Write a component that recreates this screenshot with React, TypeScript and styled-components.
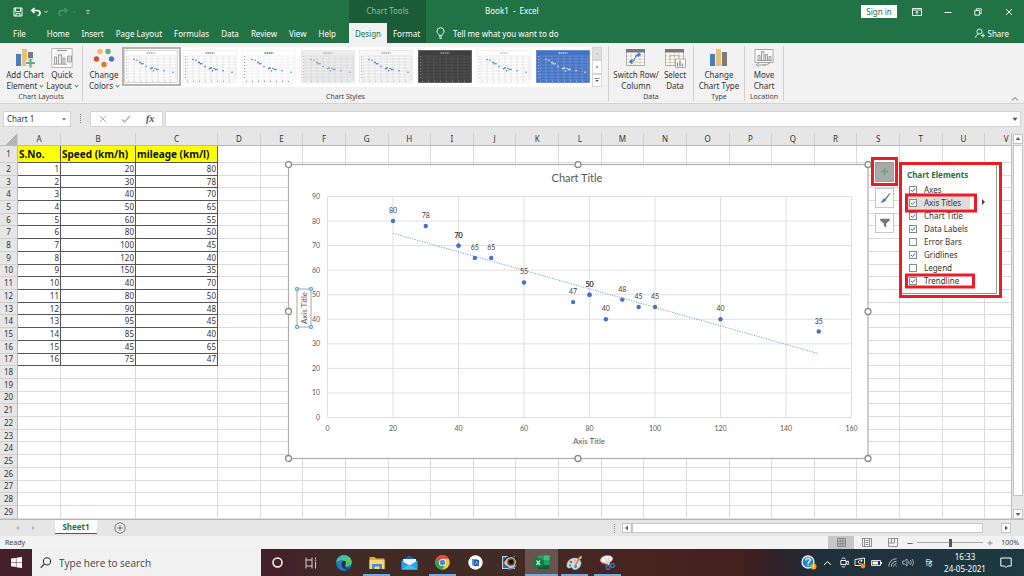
import React from "react";
import styled, { createGlobalStyle, css } from "styled-components";

const GREEN = "#217346";
const UI = `"Noto Sans", "Open Sans", sans-serif`;
const SHEET = `Lato, "Open Sans", sans-serif`;

const GlobalStyle = createGlobalStyle`
  *, *::before, *::after { box-sizing: border-box; }
  html, body { margin: 0; padding: 0; height: 100%; }
  #root { height: 100%; }
  body { font-family: ${UI}; font-size: 8px; color: #333; overflow: hidden; }
  button, input { font: inherit; color: inherit; margin: 0; padding: 0; border: 0; background: none; border-radius: 0; }
  button { cursor: pointer; white-space: nowrap; }
  svg { display: block; flex: none; }
`;

const Shell = styled.div`
  display: flex;
  flex-direction: column;
  height: 100vh;
  min-width: 0;
`;

/* ---------- title bar and tabs ---------- */

const Header = styled.header`
  background: ${GREEN};
  color: #fff;
  flex: none;
`;

const TitleBar = styled.div`
  display: grid;
  grid-template-columns: 349px 77px 1fr auto;
  height: 23px;
  align-items: center;
`;

const QuickAccess = styled.div`
  display: flex;
  align-items: center;
  padding-left: 12px;
  gap: 4px;
`;

const IconButton = styled.button<{ $w?: number; $h?: number }>`
  display: flex;
  align-items: center;
  justify-content: center;
  width: ${(p) => p.$w ?? 12}px;
  height: ${(p) => p.$h ?? 14}px;
  flex: none;
`;

const ChartTools = styled.div`
  height: 23px;
  line-height: 21px;
  text-align: center;
  background: #1a5c38;
  color: #8fbba2;
`;

const DocTitle = styled.div`
  padding-left: 59px;
  line-height: 21px;
  height: 23px;
  white-space: pre;
`;

const WindowControls = styled.div`
  display: flex;
  align-items: center;
  height: 21px;
`;

const SignIn = styled.button`
  width: 36px;
  height: 13px;
  line-height: 13px;
  margin-right: 4px;
  background: #fff;
  color: ${GREEN};
`;

const TabRow = styled.nav`
  display: flex;
  height: 20px;
  padding-left: 7px;
`;

const Tab = styled.button<{ $active?: boolean; $contextual?: boolean }>`
  height: 20px;
  padding: 0 6px;
  color: ${(p) => (p.$active ? GREEN : "#fff")};
  background: ${(p) => (p.$active ? "#f2f2f2" : p.$contextual ? "#1a5c38" : "transparent")};
`;

const MainTabs = styled.div`
  display: flex;
  width: 342px;
  flex: none;
  & > button:first-child { margin-right: 9px; }
`;

const ContextTabs = styled.div`
  display: grid;
  grid-template-columns: 38px 39px;
  flex: none;
  & > button { padding: 0; }
`;

const TellMe = styled.button`
  display: flex;
  align-items: center;
  gap: 8px;
  padding-left: 10px;
`;

const Share = styled.button`
  display: flex;
  align-items: center;
  gap: 3px;
  margin-left: auto;
  padding-right: 15px;
`;

/* ---------- ribbon ---------- */

const Ribbon = styled.section`
  display: flex;
  height: 61px;
  flex: none;
  background: #f2f2f2;
  border-bottom: 1px solid #d2d2d2;
`;

const Group = styled.div<{ $w: number }>`
  display: flex;
  flex-direction: column;
  width: ${(p) => p.$w}px;
  flex: none;
  margin: 3px 0 2px;
  border-right: 1px solid #d0d0d0;
`;

const GroupBody = styled.div<{ $start?: boolean }>`
  display: flex;
  justify-content: ${(p) => (p.$start ? "flex-start" : "center")};
  padding-left: ${(p) => (p.$start ? 3 : 0)}px;
  height: 46px;
`;

const GroupLabel = styled.div`
  height: 12px;
  line-height: 12px;
  font-size: 7px;
  text-align: center;
  color: #444;
`;

const Tool = styled.button<{ $w: number }>`
  display: flex;
  flex-direction: column;
  align-items: center;
  width: ${(p) => p.$w}px;
  line-height: 11px;
  svg { margin: 2px 0 1px; }
`;

const Caret = styled.span`
  display: inline-block;
  width: 3px;
  height: 3px;
  margin: 0 0 2px 3px;
  border: solid #777;
  border-width: 0 1px 1px 0;
  transform: rotate(45deg);
`;

const Gallery = styled.div`
  display: flex;
  width: 480px;
  height: 40px;
  margin-top: 1px;
  background: #fff;
`;

const Swatch = styled.button<{ $selected?: boolean }>`
  display: flex;
  align-items: center;
  justify-content: center;
  flex: 1;
  min-width: 0;
  height: 39px;
  border: 2px solid ${(p) => (p.$selected ? "#b5b2af" : "transparent")};
`;

const GalleryScroll = styled.div`
  display: flex;
  flex-direction: column;
  width: 10px;
  & > button { flex: 1; width: 10px; border: 1px solid #d5d5d5; background: #fff; }
  & > button:first-child { background: #dedede; }
`;

const Collapse = styled.div`
  display: flex;
  align-items: flex-end;
  margin-left: auto;
  padding: 0 3px 0 0;
`;

/* ---------- formula bar ---------- */

const FormulaBar = styled.div`
  display: flex;
  align-items: center;
  height: 29px;
  flex: none;
  padding: 0 3px;
  background: #e6e6e6;
`;

const Field = styled.div<{ $w?: number }>`
  display: flex;
  align-items: center;
  height: 16px;
  ${(p) => (p.$w ? css`width: ${p.$w}px; flex: none;` : css`flex: 1; min-width: 0;`)}
  background: #fff;
  border: 1px solid #d4d4d4;
  input { flex: 1; min-width: 0; padding-left: 3px; outline: 0; }
`;

const Grip = styled.span<{ $m: string }>`
  width: 1px;
  height: 9px;
  margin: ${(p) => p.$m};
  border-left: 1px dotted #888;
`;

const FxTools = styled(Field)`
  justify-content: space-around;
  margin-right: 2px;
`;

const Fx = styled.i`
  font: italic 700 10px "Liberation Serif", serif;
  color: #555;
`;

/* ---------- worksheet ---------- */

const Workspace = styled.main`
  display: flex;
  flex: 1;
  min-height: 0;
  background: #e6e6e6;
`;

const SheetPane = styled.div`
  position: relative;
  flex: 1;
  min-width: 0;
  overflow: hidden;
  background: #fff;
`;

const Grid = styled.table`
  width: calc(100% + 17px);
  height: 100%;
  table-layout: fixed;
  border-collapse: separate;
  border-spacing: 0;
`;

const Col = styled.col<{ $w: number }>`
  width: ${(p) => p.$w}px;
`;

const Row = styled.tr<{ $tall?: boolean }>`
  height: ${(p) => (p.$tall ? 16 : 12)}px;
`;

const ColHead = styled.th`
  height: 13px;
  padding: 0;
  line-height: 12px;
  font-weight: 400;
  background: #e6e6e6;
  border-right: 1px solid #cfcfcf;
  border-bottom: 1px solid #b8b8b8;
`;

const RowHead = styled.th`
  padding: 0;
  line-height: 10px;
  font-weight: 400;
  background: #e6e6e6;
  border-right: 1px solid #b8b8b8;
  border-bottom: 1px solid #cfcfcf;
`;

const Cell = styled.td<{ $kind?: "head" | "data" }>`
  padding: 0 1px;
  line-height: 10px;
  text-align: right;
  overflow: hidden;
  white-space: nowrap;
  border-right: 1px solid #dcdcdc;
  border-bottom: 1px solid #dcdcdc;
  ${(p) => p.$kind && css`border-color: #555;`}
  ${(p) =>
    p.$kind === "head" &&
    css`
      font: 700 10px/14px "Noto Sans", sans-serif;
      text-align: left;
      color: #111;
      background: #ffff00;
    `}
`;

const Corner = styled(ColHead)`
  background: linear-gradient(135deg, transparent 60%, #b4b4b4 60%) #e6e6e6;
`;

const ChartObject = styled.div`
  position: absolute;
  left: 284px;
  top: 28px;
`;

const SideButtons = styled.div`
  position: absolute;
  left: 871px;
  top: 24px;
  display: flex;
  flex-direction: column;
  align-items: center;
  width: 27px;
  gap: 5px;
`;

const SideButton = styled.button`
  display: flex;
  align-items: center;
  justify-content: center;
  width: 19px;
  height: 20px;
  background: #fff;
  border: 1px solid #c8c8c8;
`;

const PlusFrame = styled.div`
  display: flex;
  align-items: center;
  justify-content: center;
  width: 27px;
  height: 29px;
  margin-bottom: -3px;
  border: 3px solid #ed1c24;
  background: #fff;
  ${SideButton} { background: #a9a9a9; border-color: #999; }
`;

const ElementsPanel = styled.fieldset`
  position: absolute;
  left: 899px;
  top: 29px;
  width: 103px;
  height: 136px;
  margin: 0;
  padding: 4px 0 0;
  background: #fff;
  border: 3px solid #ed1c24;
  box-shadow: inset -2px -1px 0 #fff, inset -3px -2px 0 #7fa58e;
`;

const PanelTitle = styled.div`
  padding-left: 5px;
  height: 12px;
  line-height: 12px;
  font-weight: 700;
  color: ${GREEN};
  margin-bottom: 2px;
`;

const Option = styled.label<{ $hover?: boolean }>`
  position: relative;
  display: flex;
  align-items: center;
  gap: 7px;
  height: 13px;
  padding-left: 7px;
  line-height: 13px;
  span { flex: none; }
  ${(p) =>
    p.$hover &&
    css`
      width: 68px;
      background: linear-gradient(#dfdddc, #dfdddc) 5px 0 no-repeat;
    `}
`;

const Mark = styled.i<{ $w: number; $h: number }>`
  position: absolute;
  left: 3px;
  top: 50%;
  width: ${(p) => p.$w}px;
  height: ${(p) => p.$h}px;
  transform: translateY(-50%);
  border: 3px solid #ed1c24;
  z-index: 1;
  pointer-events: none;
`;

const Flyout = styled.i`
  position: absolute;
  left: 80px;
  top: 3px;
  border-left: 3px solid #444;
  border-top: 3px solid transparent;
  border-bottom: 3px solid transparent;
`;

const Check = styled.input`
  appearance: none;
  width: 8px;
  height: 8px;
  flex: none;
  border: 1px solid #8a8a8a;
  background: #fff;
  &:checked {
    background: #fff
      url("data:image/svg+xml,%3Csvg xmlns='http://www.w3.org/2000/svg' viewBox='0 0 6 6'%3E%3Cpath d='M1 3l1.5 1.5L5.2 1.3' fill='none' stroke='%232b6ca8' stroke-width='1'/%3E%3C/svg%3E")
      center / 6px 6px no-repeat;
  }
`;

const VScroll = styled.div`
  display: flex;
  flex-direction: column;
  align-items: center;
  width: 13px;
  flex: none;
  padding: 1px 0 0;
  border-left: 1px solid #bdbdbd;
`;

const ScrollButton = styled.button`
  display: flex;
  align-items: center;
  justify-content: center;
  width: 10px;
  height: 10px;
  flex: none;
  background: #fff;
  border: 1px solid #c4c4c4;
`;

const VThumb = styled.div`
  width: 10px;
  flex: 1;
  margin: 1px 0 13px;
  background: #fff;
  border: 1px solid #c4c4c4;
`;

/* ---------- sheet tabs and status bar ---------- */

const SheetTabs = styled.div`
  display: flex;
  align-items: center;
  height: 17px;
  flex: none;
  padding: 0 13px 0 11px;
  background: #e6e6e6;
  border-top: 1px solid #b8b8b8;
`;

const SheetTab = styled.button`
  align-self: flex-start;
  width: 42px;
  height: 14px;
  margin: 0 16px 0 13px;
  line-height: 11px;
  font-weight: 700;
  background: #fff;
  color: ${GREEN};
  border-bottom: 1px solid ${GREEN};
`;

const HScroll = styled.div`
  display: flex;
  align-items: center;
  width: 389px;
  margin-left: 7px;
`;

const HThumb = styled.div`
  flex: 1;
  height: 10px;
  margin-right: 18px;
  background: #fff;
  border: 1px solid #c4c4c4;
`;

const StatusBar = styled.div`
  display: flex;
  align-items: center;
  height: 13px;
  flex: none;
  padding: 0 5px;
  font-size: 7px;
  background: #f2f2f2;
  color: #444;
`;

const Views = styled.div`
  display: flex;
  align-items: center;
  margin-left: auto;
`;

const ViewButton = styled.button<{ $active?: boolean }>`
  display: flex;
  align-items: center;
  justify-content: center;
  width: 26px;
  height: 13px;
  background: ${(p) => (p.$active ? "#c6c6c6" : "transparent")};
`;

const ZoomSlider = styled.input`
  appearance: none;
  width: 66px;
  height: 9px;
  margin: 0 3px;
  background: linear-gradient(#aaa, #aaa) center / 100% 1px no-repeat;
  &::-webkit-slider-thumb {
    appearance: none;
    width: 3px;
    height: 8px;
    background: #555;
  }
`;

const ZoomValue = styled.span`
  width: 25px;
  text-align: right;
`;

/* ---------- taskbar ---------- */

const Taskbar = styled.footer`
  display: flex;
  height: 27px;
  flex: none;
  color: #fff;
  background: linear-gradient(90deg, #43202c 0 26%, #43202a 27%, #412b24 34%, #432a26 52%, #47241f 62%, #44211f 72%, #2f2129 76%, #20303a 80%, #1e3a42 100%);
`;

const StartButton = styled(IconButton)`
  width: 32px;
  height: 27px;
`;

const Search = styled.label`
  display: flex;
  align-items: center;
  gap: 8px;
  width: 229px;
  flex: none;
  padding-left: 8px;
  font-family: "Open Sans", sans-serif;
  font-size: 10px;
  background: #f1f1f1;
  color: #444;
  input { flex: 1; min-width: 0; outline: 0; }
  input::placeholder { color: #444; opacity: 1; }
`;

const TaskButton = styled.button<{ $open?: boolean; $active?: boolean }>`
  display: flex;
  align-items: center;
  justify-content: center;
  width: 33px;
  height: 27px;
  flex: none;
  background: ${(p) => (p.$active ? "#67534f" : "transparent")};
  background-image: ${(p) => (p.$open ? "linear-gradient(#76aadb, #76aadb)" : "none")};
  background-repeat: no-repeat;
  background-position: center bottom;
  background-size: ${(p) => (p.$active ? 33 : 27)}px 2px;
`;

const Tray = styled.div`
  display: flex;
  align-items: center;
  margin-left: auto;
`;

const Language = styled.span`
  width: 26px;
  text-align: center;
`;

const Clock = styled.div`
  width: 46px;
  text-align: center;
  line-height: 12px;
  white-space: nowrap;
`;

/* ---------- data ---------- */

const DATA: [number, number][] = [
  [20, 80], [30, 78], [40, 70], [50, 65], [60, 55], [80, 50], [100, 45], [120, 40],
  [150, 35], [40, 70], [80, 50], [90, 48], [95, 45], [85, 40], [45, 65], [75, 47],
];
const COLS = "ABCDEFGHIJKLMNOPQRSTUV".split("");
const HEADINGS = ["S.No.", "Speed (km/h)", "mileage (km/l)"];

const STYLES = [
  { bg: "#fff", grid: "#dcdcdc", dot: "#4472c4", ink: "#888", frame: "#bbb" },
  { bg: "#fff", grid: "#dcdcdc", dot: "#2f5fb8", ink: "#555", frame: "#e6e6e6" },
  { bg: "#fff", grid: "#e8eaf2", dot: "#4472c4", ink: "#334", frame: "#eee" },
  { bg: "#ededed", grid: "#d5d5d5", dot: "#7b93bd", ink: "#999", frame: "#e0e0e0" },
  { bg: "#f7f7f7", grid: "#d9d9d9", dot: "#4472c4", ink: "#888", frame: "#e0e0e0" },
  { bg: "#3f3f3f", grid: "#5c5c5c", dot: "#4a4f5a", ink: "#ccc", frame: "#3f3f3f" },
  { bg: "#fff", grid: "#dcdcdc", dot: "#4472c4", ink: "#aaa", frame: "#e6e6e6" },
  { bg: "#4472c4", grid: "#7c9cd8", dot: "#fff", ink: "#fff", frame: "#4472c4" },
];

/* ---------- drawings ---------- */

function MiniChart({ s }: { s: (typeof STYLES)[number] }) {
  return (
    <svg width="54" height="33" viewBox="0 0 54 33">
      <rect x=".5" y=".5" width="53" height="32" fill={s.bg} stroke={s.frame} strokeWidth=".6" />
      <path
        d={[0, 1, 2, 3, 4, 5, 6, 7, 8].map((i) => `M4 ${6 + i * 3}H52`).join("") +
          [0, 1, 2, 3, 4, 5, 6, 7, 8].map((i) => `M${4 + i * 6} 6V30`).join("")}
        stroke={s.grid} strokeWidth=".6" />
      <path d="M22.500 3h9" stroke={s.ink} strokeWidth="1" strokeDasharray="1.600 .5" />
      <path d="M4 31.300H52" stroke={s.ink} strokeWidth=".6" strokeDasharray="1 5" />
      <path d="M2.500 6V30" stroke={s.ink} strokeWidth=".7" strokeDasharray=".8 2.200" />
      {DATA.map(([x, y], i) => (
        <circle key={i} cx={4 + x * 0.3} cy={32 - y * 0.28} r=".75" fill={s.dot} />
      ))}
    </svg>
  );
}

const Bars = ({ plus }: { plus?: boolean }) => (
  <svg width="22" height="20" viewBox="0 0 22 20">
    <path d="M2 6h5v12H2z" fill="#4a7fb8" />
    <path d="M8 1h5v17H8z" fill="#eac074" />
    <path d="M14 4h5v14h-5z" fill="#7b7b7b" />
    {plus && <path d="M16.500 10v10M11.500 15h10" stroke="#f2f2f2" strokeWidth="4.500" />}
    {plus && <path d="M16.500 10.500v9M12 15h9" stroke="#6aa88a" strokeWidth="2.200" />}
  </svg>
);

const LayoutIcon = () => (
  <svg width="22" height="20" viewBox="0 0 22 20">
    <path d="M.8.500h20.400v19H.8z" fill="#fff" stroke="#b5b5b5" />
    <path d="M6 2.500h10" stroke="#999" strokeWidth="1.200" />
    <path d="M3 6h11M3 9h11M3 12h11" stroke="#c5c5c5" strokeWidth=".6" />
    <path d="M3.500 16V9h2v7M7.500 16V7h3v9M12 16V10h2v6M2 16.200h14M16.500 8h4v6h-4z" fill="#eee" stroke="#888" strokeWidth=".8" />
    <path d="M17.500 10h2M17.500 12h2" stroke="#888" strokeWidth=".8" />
  </svg>
);

const ColorsIcon = () => (
  <svg width="22" height="20" viewBox="0 0 22 20">
    <circle cx="7" cy="3.500" r="2.700" fill="#ebbf70" />
    <circle cx="15" cy="3.500" r="2.700" fill="#6aa88a" />
    <circle cx="3.500" cy="11" r="2.700" fill="#d1502f" />
    <circle cx="18.500" cy="11" r="2.700" fill="#3f7ebc" />
    <circle cx="11" cy="16.500" r="2.700" fill="#e07b1c" />
  </svg>
);

const SheetIcon = ({ swap }: { swap?: boolean }) => (
  <svg width="22" height="20" viewBox="0 0 22 20">
    <path d="M1.500 1.500h18v16h-18z" fill="#fff" stroke="#999" strokeWidth=".8" />
    <path d="M1.500 8h18M1.500 11.300h18M1.500 14.500h18M6 5v12M10.500 5v12M15 5v12" stroke="#c9b9a0" strokeWidth=".7" />
    <path d="M1 1h19v3.500H1z" fill="#777" />
    {swap ? (
      <>
        <path d="M5.500 12.500h4v-5h5" fill="none" stroke="#fff" strokeWidth="3.500" />
        <path d="M5.500 13.500c3 .3 4-1 4-3.500M7.500 11.300l-2.700 2.200 2.700 2.200M10.500 10c0-2.700 1-3.500 4-3.500M12.700 4.500l2.500 2-2.500 2.200" fill="none" stroke="#3f7ebc" strokeWidth="1.300" />
      </>
    ) : (
      <>
        <path d="M11.500 11h10v8.500h-10z" fill="#fff" stroke="#999" strokeWidth=".8" />
        <path d="M13.500 18.500v-4M16 18.500v-6M18.500 18.500v-3" stroke="#888" strokeWidth="1.400" />
        <path d="M6 7.500h9v3.500M6 7.500v6" fill="none" stroke="#eab56a" />
      </>
    )}
  </svg>
);

const MoveIcon = () => (
  <svg width="22" height="20" viewBox="0 0 22 20">
    <path d="M2 1.500h18v13H2z" fill="#fff" stroke="#999" strokeWidth=".9" />
    <path d="M5 12.500v-5h2v5M8.500 12.500v-9h2.500v9M12.500 12.500v-6h2v6M16 12.500v-4h2v4M4 12.500h15" fill="#eee" stroke="#888" strokeWidth=".8" />
    <path d="M5 17h8l4-2M6 15l-3 2 3 2M13 17H9" fill="none" stroke="#999" strokeWidth=".9" />
  </svg>
);

type StrokeProps = { d: string; w?: number; h?: number; color?: string; sw?: number };
const Stroke = ({ d, w = 10, h = 10, color = "currentColor", sw = 1 }: StrokeProps) => (
  <svg width={w} height={h} viewBox={`0 0 ${w} ${h}`} fill="none" stroke={color} strokeWidth={sw}>
    <path d={d} />
  </svg>
);

const Tri = ({ d, color = "#666" }: { d: string; color?: string }) => (
  <svg width="6" height="6" viewBox="0 0 6 6"><path d={d} fill={color} /></svg>
);
const DOWN = "M.5 2h5L3 5z";
const UP = "M.5 4h5L3 1z";
const LEFT = "M4 .5v5L1 3z";
const RIGHT = "M2 .5v5L5 3z";

const PLOT = { left: 43.5, top: 35.5, width: 524, height: 221 };
const px = (x: number) => PLOT.left + (x / 160) * PLOT.width;
const py = (y: number) => PLOT.top + PLOT.height - (y / 90) * PLOT.height;

function ScatterChart() {
  const xs = [0, 20, 40, 60, 80, 100, 120, 140, 160];
  const ys = [0, 10, 20, 30, 40, 50, 60, 70, 80, 90];
  return (
    <svg width="588" height="302" viewBox="0 0 588 302" fontFamily={SHEET} fontSize="7" fill="#595959" textAnchor="middle">
      <rect x="4.500" y="3.500" width="579.500" height="294" fill="#fff" stroke="#adadad" strokeWidth="1.200" />
      <g stroke="#e0e0e0">
        {xs.map((x) => <path key={x} d={`M${px(x)} ${py(90)}V${py(0)}`} />)}
        {ys.map((y) => <path key={y} d={`M${px(0)} ${py(y)}H${px(160)}`} />)}
      </g>
      {xs.map((x) => <text key={x} x={px(x)} y="270">{x}</text>)}
      {ys.map((y) => <text key={y} x="36" y={py(y) + 2.5} textAnchor="end">{y}</text>)}
      <path d={`M${px(20)} ${py(75)}L${px(150)} ${py(26)}`} stroke="#7f9fce" strokeDasharray="1.200 1.300" />
      {DATA.map(([x, y], i) => (
        <g key={i}>
          <circle cx={px(x)} cy={py(y)} r="2.200" fill="#4472c4" />
          <text x={px(x)} y={py(y) - 8} fill="#404040">{y}</text>
        </g>
      ))}
      <text x="293" y="21" fontSize="11">Chart Title</text>
      <text x="305" y="283" fontSize="8">Axis Title</text>
      <rect x="13" y="128" width="14" height="38" fill="#fff" stroke="#a6a6a6" />
      <text transform="translate(23 147) rotate(-90)" fontSize="8">Axis Title</text>
      {[[13, 128], [27, 128], [13, 166], [27, 166]].map(([x, y]) => (
        <circle key={`${x}-${y}`} cx={x} cy={y} r="1.800" fill="#b5d9f1" stroke="#4f9fd3" strokeWidth=".9" />
      ))}
      {[[4.5, 3.5], [294, 3.5], [584, 3.5], [4.5, 150.5], [584, 150.5], [4.5, 297.5], [294, 297.5], [584, 297.5]].map(([x, y]) => (
        <circle key={`${x}-${y}`} cx={x} cy={y} r="3" fill="#fff" stroke="#8c8c8c" strokeWidth="1.300" />
      ))}
    </svg>
  );
}

const Edge = () => (
  <svg width="16" height="16" viewBox="0 0 16 16">
    <circle cx="8" cy="8" r="7.800" fill="#1a7fd0" />
    <path d="M.3 7C1 2.500 4.500.2 8 .2c4.500 0 7.800 3.300 7.800 6.800 0 2.500-2 4-4.300 4-1.500 0-2.300-.6-2-1.300.8-1 .8-3.700-2.300-4.200C4.500 5 1.500 6 .3 7z" fill="#4cc96b" />
    <path d="M.3 7C1 2.500 4.500.2 8 .2c2 0 3.500.6 4.800 1.600C8 1 4 3 .3 7z" fill="#35b8d6" />
    <path d="M5.500 8.500c-.5 3 1.500 6 5 6.300 1.500-.3 3-1.300 4-2.800-3.500 1.500-8 .5-7.500-4z" fill="#0c4a94" />
    <path d="M9.300 9.500c1-1 .8-3-.8-3.700-1.500 0-3 1.500-2.500 4 .3 1.700 2 3 4 3-1.500-1-1.500-2.500-.7-3.300z" fill="#43282a" />
  </svg>
);

const Folder = () => (
  <svg width="16" height="14" viewBox="0 0 16 14">
    <path d="M.5 1h5l1.500 1.500h8.500V13H.5z" fill="#e8a92f" />
    <path d="M.5 4h15v9H.5z" fill="#fcd670" />
    <path d="M3 13V8h10v5h-2.500v-2.500h-5V13z" fill="#3f8fd6" />
  </svg>
);

const Mail = () => (
  <svg width="17" height="15" viewBox="0 0 17 15">
    <path d="M.5 5.500L8.500.5l8 5v9H.5z" fill="#1562ab" />
    <path d="M2 4h13v6H2z" fill="#f4f8fb" />
    <path d="M.5 5.500l8 5 8-5v9H.5z" fill="#2ca2e8" />
    <path d="M.5 14.500l8-5 8 5z" fill="#45c0f5" />
  </svg>
);

const Chrome = () => (
  <svg width="15" height="15" viewBox="0 0 16 16">
    <circle cx="8" cy="8" r="7.700" fill="#f7c928" />
    <path d="M1.300 4A7.700 7.700 0 0 1 14.700 4H8L4.600 10z" fill="#dd4b3e" />
    <path d="M1.300 4.100L4.700 10 8 11.800h2L7.700 15.700A7.700 7.700 0 0 1 1.300 4.100z" fill="#2fa14f" />
    <circle cx="8" cy="8" r="3.800" fill="#fff" />
    <circle cx="8" cy="8" r="3" fill="#4a86e8" />
  </svg>
);

const CircleApp = () => (
  <svg width="15" height="15" viewBox="0 0 15 15">
    <circle cx="7.500" cy="7.500" r="7.200" fill="#fff" />
    <path d="M4 4h5.500v6.500H4z" fill="#3ba3d8" />
    <path d="M6 5h5v6H6z" fill="#2557a8" />
    <path d="M7 10l1.500-4L10 10" stroke="#bfe4ff" strokeWidth=".6" fill="none" />
  </svg>
);

const EyeApp = () => (
  <svg width="16" height="15" viewBox="0 0 16 15">
    <path d="M1 1h13v13H1z" fill="#bcd3e6" />
    <path d="M2 2h2.500v8H8v3H2z" fill="#2f67ae" />
    <path d="M3 8c2-5 9-7 12-2 0 4-3 6-6 6-3 0-4-2-6-4z" fill="#e3c296" />
    <circle cx="10" cy="7" r="3.800" fill="#6c4a2c" />
    <circle cx="10" cy="7" r="2.300" fill="#101010" />
    <path d="M3 6c3-5.500 9-6 12.500-1.500" stroke="#222" fill="none" strokeWidth="1.300" />
    <path d="M7 14c4 0 7-1 8-4" stroke="#4c8dcc" fill="none" strokeWidth="1.300" />
  </svg>
);

const ExcelApp = () => (
  <svg width="16" height="15" viewBox="0 0 16 15">
    <path d="M4 .5h11.500v14H4z" fill="#21a366" />
    <path d="M10 .5h5.500V5H10z" fill="#33c481" />
    <path d="M4 5h6v5H4z" fill="#107c41" />
    <path d="M4 10h11.500v4.500H4z" fill="#185c37" />
    <path d="M0 3.500h8.500V12H0z" fill="#107c41" />
    <path d="M2.500 5.500l3.500 4.500M6 5.500L2.500 10" stroke="#fff" strokeWidth="1.200" />
  </svg>
);

const Paint = () => (
  <svg width="17" height="16" viewBox="0 0 17 16">
    <path d="M8 3C3 3.500 0 8 1 11.500c.7 2.500 3 1.500 4 1 1.500-.5 1.500 2.500 4 2.300 4-.5 6.500-4 6-7.500C14.500 4 11.500 2.700 8 3z" fill="#c7dcea" stroke="#7d9db2" strokeWidth=".5" />
    <circle cx="5" cy="7" r="1.300" fill="#d94b3d" />
    <circle cx="9" cy="5.500" r="1.300" fill="#efb53c" />
    <circle cx="4" cy="10.500" r="1.200" fill="#4caf50" />
    <circle cx="9.500" cy="11.500" r="1.400" fill="#3f7ec4" />
    <path d="M9 11L14 2" stroke="#c88a3c" strokeWidth="1.600" />
    <path d="M13 3.500L15 .5l1 1.500-1.500 2.500z" fill="#e5c27c" />
  </svg>
);

const Snip = () => (
  <svg width="17" height="16" viewBox="0 0 17 16">
    <ellipse cx="7.500" cy="4.500" rx="6.500" ry="4" transform="rotate(-12 7.500 4.500)" fill="#f1f1f1" stroke="#b94a40" strokeWidth=".6" />
    <path d="M3 8.500L10 10l1-2-3-2z" fill="#d8d8d8" />
    <path d="M2 7.500l7 2.500" stroke="#c2483d" strokeWidth="1.200" />
    <path d="M6 3l4 7M9.500 2.500l.8 7" stroke="#c9c9c9" />
    <circle cx="9" cy="12.500" r="1.900" fill="none" stroke="#2d82c6" strokeWidth="1.200" />
    <circle cx="13.500" cy="10.500" r="1.900" fill="none" stroke="#2d82c6" strokeWidth="1.200" />
  </svg>
);

const Help = () => (
  <svg width="16" height="15" viewBox="0 0 16 15">
    <circle cx="7" cy="7" r="6" fill="#1c86cf" stroke="#eaf5fc" strokeWidth="1.300" />
    <path d="M5 5.500c0-3 4.200-2.700 4.200-.3C9.200 6.800 7 6.800 7 8.700M7 9.700v1.300" stroke="#fff" strokeWidth="1.400" fill="none" />
    <circle cx="12.500" cy="11.500" r="3" fill="#f2a51e" />
    <path d="M12.500 9.700v2.300M12.500 12.600v.8" stroke="#fff" strokeWidth=".9" />
  </svg>
);

/* ---------- page ---------- */

const OPTIONS: { name: string; on: boolean; hover?: boolean; mark?: [number, number] }[] = [
  { name: "Axes", on: true },
  { name: "Axis Titles", on: true, hover: true, mark: [72, 19] },
  { name: "Chart Title", on: true },
  { name: "Data Labels", on: true },
  { name: "Error Bars", on: false },
  { name: "Gridlines", on: true },
  { name: "Legend", on: false },
  { name: "Trendline", on: true, mark: [70, 15] },
];

export default function App() {
  return (
    <Shell>
      <GlobalStyle />
      <Header>
        <TitleBar>
          <QuickAccess>
            <IconButton aria-label="Save">
              <Stroke w={10} h={10} d="M1 1h8v8H1zM2.500 1v3.500h5V1M3 9V6.500h4V9" />
            </IconButton>
            <IconButton aria-label="Undo" $w={22}>
              <Stroke w={12} h={10} sw={1.6} d="M4.500 1L1.800 3.500l2.700 2.500M2 3.500h5c4 0 4 5 .5 5" />
              <Stroke w={6} h={4} d="M2.500 1L4 2.500 5.500 1" sw={0.8} />
            </IconButton>
            <IconButton aria-label="Redo" $w={26}>
              <Stroke w={12} h={10} sw={1.4} color="#4d9170" d="M7.500 1l2.700 2.500-2.700 2.500M10 3.500H5c-4 0-4 5-.5 5" />
              <Stroke w={8} h={4} d="M3.500 1L5 2.500 6.500 1" sw={0.8} color="#4d9170" />
            </IconButton>
            <IconButton aria-label="Customize Quick Access Toolbar" $w={8}>
              <Stroke w={6} h={6} d="M1.500 1.500h3M1.800 3.500L3 4.700l1.200-1.200" sw={0.9} />
            </IconButton>
          </QuickAccess>
          <ChartTools>Chart Tools</ChartTools>
          <DocTitle>{"Book1  -  Excel"}</DocTitle>
          <WindowControls>
            <SignIn>Sign in</SignIn>
            <IconButton aria-label="Ribbon Display Options" $w={31}>
              <Stroke w={10} h={8} sw={0.9} d="M.5.5h9v7h-9zM.5 2h9M5 6.500V3.500M3.500 4.800L5 3.400l1.500 1.400" />
            </IconButton>
            <IconButton aria-label="Minimize" $w={31}><Stroke w={8} h={8} d="M.5 4.500h7" /></IconButton>
            <IconButton aria-label="Restore" $w={30}>
              <Stroke w={8} h={8} sw={0.9} d="M.8 2.500h4.700v4.700H.8zM2.300 2.500V.8h4.900v4.700H5.500" />
            </IconButton>
            <IconButton aria-label="Close" $w={31}><Stroke w={8} h={8} d="M1 1l6 6M7 1L1 7" /></IconButton>
          </WindowControls>
        </TitleBar>
        <TabRow>
          <MainTabs>
            {["File", "Home", "Insert", "Page Layout", "Formulas", "Data", "Review", "View", "Help"].map((t) => (
              <Tab key={t}>{t}</Tab>
            ))}
          </MainTabs>
          <ContextTabs>
            <Tab $active>Design</Tab>
            <Tab $contextual>Format</Tab>
          </ContextTabs>
          <TellMe>
            <Stroke w={9} h={12} sw={0.9} d="M3 8.500C3 7 1 6.500 1 4.200a3.500 3.500 0 0 1 7 0C8 6.500 6 7 6 8.500zM3 10h3M3.500 11.500h2" />
            Tell me what you want to do
          </TellMe>
          <Share>
            <Stroke w={10} h={10} sw={0.9} d="M4.500 1a2.500 2.500 0 1 1 0 5 2.500 2.500 0 0 1 0-5M.7 9.800C.7 7.500 2 6 4 6M6 7.500h4M8 5.500v4" />
            Share
          </Share>
        </TabRow>
      </Header>

      <Ribbon>
        <Group $w={83}>
          <GroupBody>
            <Tool $w={42}><Bars plus /><span>Add Chart</span><span>Element<Caret /></span></Tool>
            <Tool $w={32}><LayoutIcon /><span>Quick</span><span>Layout<Caret /></span></Tool>
          </GroupBody>
          <GroupLabel>Chart Layouts</GroupLabel>
        </Group>
        <Group $w={526}>
          <GroupBody $start>
            <Tool $w={36}><ColorsIcon /><span>Change</span><span>Colors<Caret /></span></Tool>
            <Gallery>
              {STYLES.map((s, i) => (
                <Swatch key={i} $selected={i === 0} aria-label={`Style ${i + 1}`}><MiniChart s={s} /></Swatch>
              ))}
              <GalleryScroll>
                <IconButton aria-label="Previous styles" $w={10}><Tri d="M2 3.500h2L3 2.300z" color="#aaa" /></IconButton>
                <IconButton aria-label="Next styles" $w={10}><Tri d="M1.500 2.500h3L3 4.200z" /></IconButton>
                <IconButton aria-label="More styles" $w={10}><Tri d="M.5 1h5v.8h-5zM1 3h4L3 5z" /></IconButton>
              </GalleryScroll>
            </Gallery>
          </GroupBody>
          <GroupLabel>Chart Styles</GroupLabel>
        </Group>
        <Group $w={85}>
          <GroupBody>
            <Tool $w={48}><SheetIcon swap /><span>Switch Row/</span><span>Column</span></Tool>
            <Tool $w={30}><SheetIcon /><span>Select</span><span>Data</span></Tool>
          </GroupBody>
          <GroupLabel>Data</GroupLabel>
        </Group>
        <Group $w={51}>
          <GroupBody>
            <Tool $w={42}><Bars /><span>Change</span><span>Chart Type</span></Tool>
          </GroupBody>
          <GroupLabel>Type</GroupLabel>
        </Group>
        <Group $w={39}>
          <GroupBody>
            <Tool $w={30}><MoveIcon /><span>Move</span><span>Chart</span></Tool>
          </GroupBody>
          <GroupLabel>Location</GroupLabel>
        </Group>
        <Collapse>
          <IconButton aria-label="Collapse the Ribbon" $h={8}>
            <Stroke w={8} h={6} d="M1 4.500l3-3 3 3" color="#666" />
          </IconButton>
        </Collapse>
      </Ribbon>

      <FormulaBar>
        <Field $w={68}>
          <input aria-label="Name Box" defaultValue="Chart 1" />
          <IconButton aria-label="Open name list"><Tri d="M1 2.200h4L3 4.500z" /></IconButton>
        </Field>
        <Grip $m="0 9px" />
        <FxTools $w={73}>
          <IconButton aria-label="Cancel"><Stroke w={8} h={8} d="M1 1l6 6M7 1L1 7" color="#b0b0b0" /></IconButton>
          <IconButton aria-label="Enter"><Stroke w={10} h={8} d="M1 4.500L3.500 7 9 1" color="#b0b0b0" sw={1.3} /></IconButton>
          <IconButton aria-label="Insert Function"><Fx>fx</Fx></IconButton>
        </FxTools>
        <Field>
          <input aria-label="Formula Bar" />
          <IconButton aria-label="Expand Formula Bar" $w={10}><Tri d="M.5 1.800h5L3 5z" color="#555" /></IconButton>
        </Field>
      </FormulaBar>

      <Workspace>
        <SheetPane>
          <Grid>
            <colgroup>
              <Col $w={18} /><Col $w={43} /><Col $w={75} /><Col $w={82} />
              {COLS.slice(3).map((c) => <col key={c} />)}
            </colgroup>
            <thead>
              <tr>
                <Corner aria-label="Select all" />
                {COLS.map((c) => <ColHead key={c} scope="col">{c}</ColHead>)}
              </tr>
            </thead>
            <tbody>
              {Array.from({ length: 29 }, (_, r) => (
                <Row key={r} $tall={r === 0}>
                  <RowHead scope="row">{r + 1}</RowHead>
                  {COLS.map((c, i) => {
                    const inData = i < 3 && r <= DATA.length;
                    if (!inData) return <Cell key={c} />;
                    if (r === 0) return <Cell key={c} $kind="head">{HEADINGS[i]}</Cell>;
                    return <Cell key={c} $kind="data">{[r, ...DATA[r - 1]][i]}</Cell>;
                  })}
                </Row>
              ))}
            </tbody>
          </Grid>
          <ChartObject><ScatterChart /></ChartObject>
          <SideButtons>
            <PlusFrame>
              <SideButton aria-label="Chart Elements">
                <Stroke w={9} h={9} d="M4.500 1v7M1 4.500h7" color="#6aa88a" sw={2} />
              </SideButton>
            </PlusFrame>
            <SideButton aria-label="Chart Styles">
              <svg width="12" height="12" viewBox="0 0 12 12">
                <path d="M6 6.500L10.500 1l.8.8L7.200 7.500z" fill="#777" />
                <path d="M6 6.500l1.200 1C6.500 10 4 10.800 1 10.500c1.800-.8 2-1.500 2.500-2.500S5 6.500 6 6.500z" fill="#3f7ebc" />
              </svg>
            </SideButton>
            <SideButton aria-label="Chart Filters">
              <svg width="10" height="10" viewBox="0 0 10 10"><path d="M.3.8h9.400v1.700L6.200 5.500v4L3.800 8V5.500L.3 2.500z" fill="#777" /></svg>
            </SideButton>
          </SideButtons>
          <ElementsPanel aria-label="Chart Elements">
            <PanelTitle>Chart Elements</PanelTitle>
            {OPTIONS.map((o) => (
              <Option key={o.name} $hover={o.hover}>
                <Check type="checkbox" defaultChecked={o.on} />
                <span>{o.name}</span>
                {o.mark && <Mark $w={o.mark[0]} $h={o.mark[1]} />}
                {o.hover && <Flyout />}
              </Option>
            ))}
          </ElementsPanel>
        </SheetPane>
        <VScroll>
          <ScrollButton aria-label="Scroll up"><Tri d={UP} /></ScrollButton>
          <VThumb />
          <ScrollButton aria-label="Scroll down"><Tri d={DOWN} /></ScrollButton>
        </VScroll>
      </Workspace>

      <SheetTabs>
        <IconButton aria-label="Previous sheet" $w={13}><Tri d={LEFT} color="#bbb" /></IconButton>
        <IconButton aria-label="Next sheet" $w={18}><Tri d={RIGHT} color="#bbb" /></IconButton>
        <SheetTab>Sheet1</SheetTab>
        <IconButton aria-label="New sheet" $w={14}>
          <Stroke w={12} h={12} d="M6 .8a5.200 5.200 0 1 1 0 10.400A5.200 5.200 0 0 1 6 .8M6 3.300v5.400M3.300 6h5.400" color="#777" />
        </IconButton>
        <Grip $m="0 0 0 auto" />
        <HScroll>
          <ScrollButton aria-label="Scroll left"><Tri d={LEFT} /></ScrollButton>
          <HThumb />
          <ScrollButton aria-label="Scroll right"><Tri d={RIGHT} /></ScrollButton>
        </HScroll>
      </SheetTabs>

      <StatusBar>
        <span>Ready</span>
        <Views>
          <ViewButton $active aria-label="Normal">
            <Stroke w={9} h={9} sw={0.8} color="#777" d="M.5.5h8v8h-8zM.5 3.200h8M.5 5.800h8M3.200.5v8M5.800.5v8" />
          </ViewButton>
          <ViewButton aria-label="Page Layout">
            <Stroke w={10} h={9} sw={0.8} color="#777" d="M.5.5h9v8h-9zM2.500.5v8M7.500.5v8M3.500 2.500h3M3.500 4.500h3M3.500 6.500h3" />
          </ViewButton>
          <ViewButton aria-label="Page Break Preview">
            <Stroke w={10} h={9} sw={0.8} color="#777" d="M.5.5h9v8h-9zM3.500.5v4.500M6.500.5v4.500M.5 5h6" />
          </ViewButton>
          <IconButton aria-label="Zoom out" $w={8} $h={12}><Stroke w={6} h={6} d="M.5 3.500h5" color="#666" /></IconButton>
          <ZoomSlider type="range" min={0} max={100} defaultValue={50} aria-label="Zoom" />
          <IconButton aria-label="Zoom in" $w={8} $h={12}><Stroke w={6} h={6} d="M.5 3h5M3 .5v5" color="#777" sw={0.8} /></IconButton>
          <ZoomValue>100%</ZoomValue>
        </Views>
      </StatusBar>

      <Taskbar>
        <StartButton aria-label="Start">
          <svg width="11" height="11" viewBox="0 0 11 11" fill="#fff"><path d="M0 1.600L4.900.9v4.300H0zM5.400.8L11 0v5.200H5.400zM0 5.700h4.900V10L0 9.300zM5.400 5.700H11V11l-5.600-.8z" /></svg>
        </StartButton>
        <Search>
          <Stroke w={11} h={12} sw={1.1} color="#333" d="M7 .8a3.600 3.600 0 1 1 0 7.200 3.600 3.600 0 0 1 0-7.200M4.300 7L.7 10.800" />
          <input type="search" placeholder="Type here to search" aria-label="Search" />
        </Search>
        <TaskButton aria-label="Cortana">
          <Stroke w={11} h={11} sw={1.5} d="M5.500 1a4.500 4.500 0 1 1 0 9 4.500 4.500 0 0 1 0-9" />
        </TaskButton>
        <TaskButton aria-label="Task View">
          <Stroke w={12} h={12} sw={1} color="#d9cfcf" d="M1 .5V3h6V.5M1 11.500V9h6v2.500M1 3v6M7 3v6M10.500.5v2M10.500 5v6.500M9.800 3.800h1.500" />
        </TaskButton>
        <TaskButton aria-label="Microsoft Edge"><Edge /></TaskButton>
        <TaskButton aria-label="File Explorer" $open><Folder /></TaskButton>
        <TaskButton aria-label="Mail"><Mail /></TaskButton>
        <TaskButton aria-label="Google Chrome" $open><Chrome /></TaskButton>
        <TaskButton aria-label="Assistant"><CircleApp /></TaskButton>
        <TaskButton aria-label="Viewer"><EyeApp /></TaskButton>
        <TaskButton aria-label="Excel" $open $active><ExcelApp /></TaskButton>
        <TaskButton aria-label="Paint" $open><Paint /></TaskButton>
        <TaskButton aria-label="Snipping Tool" $open><Snip /></TaskButton>
        <Tray>
          <IconButton aria-label="Get help" $w={20}><Help /></IconButton>
          <IconButton aria-label="Show hidden icons" $w={17}><Stroke w={9} h={6} d="M1 5l3.500-3.500L8 5" /></IconButton>
          <IconButton aria-label="Meet Now" $w={16}>
            <Stroke w={9} h={11} sw={0.9} d="M.8 3.500h5.200v4H.8zM6 5l2.300-1v3.500L6 6.500M1.500 2c1-1.300 3-1.300 4 0M1.500 9c1 1.300 3 1.300 4 0" />
          </IconButton>
          <IconButton aria-label="Updates" $w={15}>
            <svg width="12" height="12" viewBox="0 0 12 12" fill="none" stroke="#fff" strokeWidth=".9">
              <path d="M1 2.500l9.500-1.500v7.500H1zM7.800 3.500c-1.500-1-3.500 0-3.500 1.500s1.500 2 3 1.500M8 2.500v1.800H6.500" />
              <circle cx="9" cy="9" r="2.400" fill="#f28c1a" stroke="none" />
            </svg>
          </IconButton>
          <IconButton aria-label="Battery" $w={18}>
            <svg width="11" height="6" viewBox="0 0 11 6"><path d="M.5.5h9v5h-9z" fill="none" stroke="#ddd" /><path d="M1.500 1.500H7v3H1.500zM10 2h1v2h-1z" fill="#fff" /></svg>
          </IconButton>
          <IconButton aria-label="Network" $w={15}>
            <Stroke w={9} h={9} sw={0.9} color="#c9d2d5" d="M.8 8.500C1 4 4 1 8.500.8M3.300 8.500c.2-3 2-5 5.200-5.200M5.600 8.500c.2-1.600 1.200-2.700 2.900-2.900M7.500 7.500l1 1" />
          </IconButton>
          <IconButton aria-label="Volume" $w={16}>
            <Stroke w={12} h={9} sw={0.8} color="#c5ccd0" d="M.7 3h1.800L5 1v7L2.500 6H.7zM6.500 3c.7.800.7 2.200 0 3M8.200 2c1.300 1.500 1.300 3.500 0 5M10 1c1.800 2 1.800 5 0 7" />
          </IconButton>
          <Language>हि</Language>
          <Clock>16:33<br />24-05-2021</Clock>
          <IconButton aria-label="Notifications" $w={36}>
            <Stroke w={12} h={12} sw={1} d="M.8 1h10.400v8H7.500L6 10.500 4.500 9H.8z" />
          </IconButton>
        </Tray>
      </Taskbar>
    </Shell>
  );
}
